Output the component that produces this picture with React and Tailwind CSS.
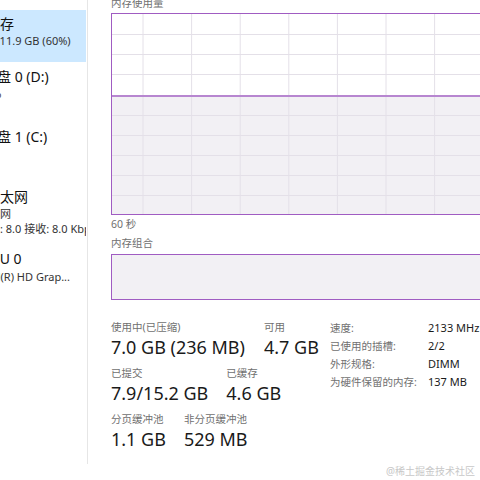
const font = { fontFamily: '"Noto Sans", "Noto Sans CJK SC", sans-serif' };

const vLines = [31, 79.6, 128.2, 176.8, 225.4, 274, 322.6, 371.2];
const hLines = [20, 40, 60, 101, 121, 141, 161, 181];

function SideItem({ selected, className, children }) {
  return (
    <div className={`w-[86px] overflow-hidden whitespace-nowrap ${selected ? "bg-[#cce8ff]" : ""} ${className}`}>
      {children}
    </div>
  );
}

function Stat({ label, value }) {
  return (
    <div className="flex flex-col whitespace-nowrap">
      <span className="text-[10.5px] leading-[16px] text-[#707070]">{label}</span>
      <span className="text-[18px] leading-[24px] text-[#1a1a1a]">{value}</span>
    </div>
  );
}

function UsageGraph() {
  return (
    <div className="w-[400px] h-[202px] border border-[#a05cc2] mt-[2px] shrink-0">
      <svg width="398" height="200" className="block">
        <rect x="0" y="82" width="398" height="118" fill="#f2f0f4" />
        {vLines.map((x) => (
          <line key={x} x1={x} y1="0" x2={x} y2="200" stroke="#e4e0e8" strokeWidth="1" />
        ))}
        {hLines.map((y) => (
          <line key={y} x1="0" y1={y + 0.5} x2="398" y2={y + 0.5} stroke="#e4e0e8" strokeWidth="1" />
        ))}
        <line x1="0" y1="82" x2="398" y2="82" stroke="#b786d0" strokeWidth="2" />
      </svg>
    </div>
  );
}

export default function App() {
  return (
    <div className="relative w-[480px] h-[480px] overflow-hidden bg-white flex" style={font}>
      {/* left list, scrolled so only its right part shows */}
      <div className="w-[88px] h-[464px] shrink-0 border-r border-[#e6e6e6] overflow-hidden">
        <SideItem selected className="mt-[10px] h-[52px] pt-[5px]">
          <div className="ml-[-14px] text-[14px] leading-[18px] text-[#111]">内存</div>
          <div className="ml-[-20px] text-[11px] leading-[15px] text-[#333]">7.1/11.9 GB (60%)</div>
        </SideItem>
        <SideItem className="h-[60px] pt-[6px]">
          <div className="ml-[-17px] text-[14px] leading-[18px] text-[#111]">磁盘 0 (D:)</div>
          <div className="ml-[-14px] text-[11px] leading-[15px] text-[#333]">0%</div>
        </SideItem>
        <SideItem className="h-[60px] pt-[6px]">
          <div className="ml-[-17px] text-[14px] leading-[18px] text-[#111]">磁盘 1 (C:)</div>
        </SideItem>
        <SideItem className="h-[62px] pt-[6px]">
          <div className="ml-[-14px] text-[14px] leading-[18px] text-[#111]">以太网</div>
          <div className="ml-[-22px] text-[11px] leading-[15px] text-[#333]">以太网</div>
          <div className="ml-[-22px] text-[11px] leading-[15px] text-[#333]">发送: 8.0 接收: 8.0 Kbps</div>
        </SideItem>
        <SideItem className="pt-[6px]">
          <div className="ml-[-19px] text-[14px] leading-[18px] text-[#111]">GPU 0</div>
          <div className="ml-[-23px] mt-[1px] text-[11px] leading-[15px] text-[#333]">Intel(R) HD Grap...</div>
        </SideItem>
      </div>

      {/* memory details */}
      <div className="flex-1 overflow-hidden pl-[23px] flex flex-col">
        <div className="mt-[-5px] text-[10.5px] leading-[16px] text-[#707070]">内存使用量</div>
        <UsageGraph />
        <div className="mt-[1px] text-[10.5px] leading-[16px] text-[#707070]">60 秒</div>
        <div className="mt-[3px] text-[10.5px] leading-[16px] text-[#707070]">内存组合</div>
        <div className="mt-[3px] w-[400px] h-[46px] border border-[#a05cc2] bg-[#f2f0f4] shrink-0" />

        <div className="mt-[19px] flex items-start">
          <div className="w-[219px] shrink-0 flex flex-col gap-[6px]">
            <div className="flex gap-[19px]">
              <Stat label="使用中(已压缩)" value="7.0 GB (236 MB)" />
              <Stat label="可用" value="4.7 GB" />
            </div>
            <div className="flex gap-[18px]">
              <Stat label="已提交" value="7.9/15.2 GB" />
              <Stat label="已缓存" value="4.6 GB" />
            </div>
            <div className="flex gap-[18px]">
              <Stat label="分页缓冲池" value="1.1 GB" />
              <Stat label="非分页缓冲池" value="529 MB" />
            </div>
          </div>
          <div className="grid grid-cols-[98px_auto] leading-[18px] whitespace-nowrap">
            <span className="text-[10.5px] text-[#707070]">速度:</span>
            <span className="text-[11px] text-[#1a1a1a]">2133 MHz</span>
            <span className="text-[10.5px] text-[#707070]">已使用的插槽:</span>
            <span className="text-[11px] text-[#1a1a1a]">2/2</span>
            <span className="text-[10.5px] text-[#707070]">外形规格:</span>
            <span className="text-[11px] text-[#1a1a1a]">DIMM</span>
            <span className="text-[10.5px] text-[#707070]">为硬件保留的内存:</span>
            <span className="text-[11px] text-[#1a1a1a]">137 MB</span>
          </div>
        </div>
      </div>

      <div className="absolute right-[5px] bottom-[2px] text-[10px] leading-[14px] text-[#c8c8c8]">@稀土掘金技术社区</div>
    </div>
  );
}
